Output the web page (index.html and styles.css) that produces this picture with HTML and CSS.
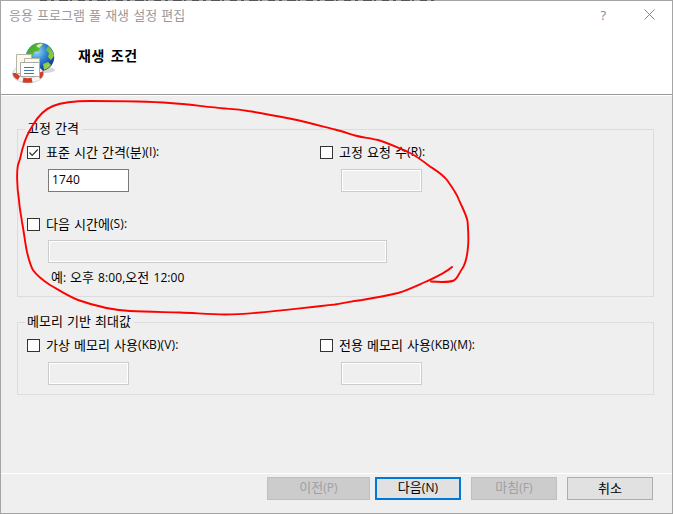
FILE: index.html
```html
<!DOCTYPE html>
<html lang="ko">
<head>
<meta charset="utf-8">
<title>응용 프로그램 풀 재생 설정 편집</title>
<link rel="stylesheet" href="styles.css">
</head>
<body>
<main class="window">
  <header class="header">
    <div class="titlebar">
      <span class="title">응용 프로그램 풀 재생 설정 편집</span>
      <span class="help">?</span>
      <svg class="close" width="11" height="11" viewBox="0 0 11 11"><path d="M.5.5l10 10M10.500.5l-10 10" fill="none" stroke="#888"/></svg>
    </div>
    <div class="banner">
      <svg class="logo" width="44" height="42" viewBox="0 0 44 42">
        <defs>
          <radialGradient id="sea" cx=".38" cy=".3" r=".75"><stop offset="0" stop-color="#9bdcf8"/><stop offset=".45" stop-color="#3488d4"/><stop offset="1" stop-color="#102d86"/></radialGradient>
          <linearGradient id="land" x2="1" y2="1"><stop stop-color="#31a52b"/><stop offset="1" stop-color="#b0dc43"/></linearGradient>
        </defs>
        <ellipse cx="33" cy="28" rx="10" ry="3" fill="#bbb" opacity=".6"/>
        <circle cx="28" cy="15" r="14.200" fill="url(#sea)"/>
        <path d="M15 11Q17 4 24 1.500l7 .5-3 3-1 4-5 1-2 5-5 1zM36 4q5 4 6 10l-3 4-3-3 1-4-3-3zM31 22l5-2 3 3q-3 4-7 5z" fill="url(#land)"/>
        <path d="M24 4q3-3 7-2l-4 4z" fill="#d9f1b1"/>
        <ellipse cx="16" cy="32" rx="13" ry="6.500" fill="none" stroke="#c4cbd0" stroke-width="5.500"/>
        <ellipse cx="16" cy="32" rx="13" ry="6.500" fill="none" stroke="#f4f4f4" stroke-width="4"/>
        <path d="M3 31q0 3 4 5M11 38q5 1 9 0M27 35q3-2 2-5" fill="none" stroke="#cf3e25" stroke-width="4.500"/>
        <path d="M4.500 12.500h15v19h-15z" fill="#fcf9e9" stroke="#b6b5ad"/>
        <path d="M12.500 16.500h15v5h-15z" fill="#fcf9e9" stroke="#b6b5ad"/>
        <path d="M8.500 20.500h19v14h-19z" fill="#fff" stroke="#aaa"/>
        <path d="M12 25.500h10M12 28.500h10M12 31.500h10" stroke="#3e79b5"/>
      </svg>
      <h1 class="heading">재생 조건</h1>
    </div>
  </header>

  <section class="content">
    <fieldset class="group fixed">
      <legend>고정 간격</legend>
      <div class="row">
        <div class="field">
          <label><span class="box"><svg width="11" height="11" viewBox="0 0 11 11"><path d="M1.500 5.500l2.700 2.800L9.700 2.500" fill="none" stroke="#333" stroke-width="1.200"/></svg></span>표준 시간 간격<i>(</i>분<i>)(I):</i></label>
          <div class="input active"><i>1740</i></div>
        </div>
        <div class="field">
          <label><span class="box"></span>고정 요청 수<i>(R):</i></label>
          <div class="input"></div>
        </div>
      </div>
      <div class="field times">
        <label><span class="box"></span>다음 시간에<i>(S):</i></label>
        <div class="input wide"></div>
        <p class="example">예<i>: </i>오후 <i>8:00,</i>오전 <i>12:00</i></p>
      </div>
    </fieldset>
    <fieldset class="group memory">
      <legend>메모리 기반 최대값</legend>
      <div class="row">
        <div class="field">
          <label><span class="box"></span>가상 메모리 사용<i>(KB)(V):</i></label>
          <div class="input"></div>
        </div>
        <div class="field">
          <label><span class="box"></span>전용 메모리 사용<i>(KB)(M):</i></label>
          <div class="input"></div>
        </div>
      </div>
    </fieldset>
  </section>

  <footer class="footer">
    <div class="button previous disabled"><span>이전<i>(P)</i></span></div>
    <div class="button default"><span>다음<i>(N)</i></span></div>
    <div class="button disabled finish"><span>마침<i>(F)</i></span></div>
    <div class="button cancel"><span>취소</span></div>
  </footer>

  <svg class="annotation" width="673" height="514" viewBox="0 0 673 514">
    <path d="M40 .5H435" stroke="#555" stroke-dasharray="7 4 3 5 9 2 2 6" fill="none"/>
    <path d="M431 281.500C438 282 449 282.500 454 280.500C458 278 459 273 462 269C467 262 467 255 468 247C469 237 468 228 467.500 221C466 214 462 207 459 200C457 194 452 187 447 180C442 174 437 171 430 166.500C423 161 415 155 407 151.500C398 148 386 142 378 140C370 138 362 137.500 355 135.500C350 134 341 131 335 129.500C321 126 306 122 292 119C277 116 262 113 248 111C240 109.500 232 109 225 108.500C206 107 188 104 170 103C144 101 116 101 90 101C76 101 63 102 53 106C43 110 37 118 33 125C29 131 25 140 23 147C21 153 21 157 19 162C16 168 17 188 19 200C19.500 208 21 215 22 222C24 232 25 243 27 252C28.500 258 30 265 33 270C37 276 44 281 50 285C59 290 68 296 78 300C95 306 112 310 130 311C147 312 164 312 180 312.500C195 313 210 314.500 225 314.500C262 314 299 308 335 304.500C344 303 353 301 362 300C374 298 386 296 398 293C408 290 416 286 425 282C434 278 444 274 452 267" fill="none" stroke="#f00" stroke-width="1.900" stroke-linecap="round"/>
  </svg>
</main>
</body>
</html>
```
FILE: styles.css
```css
* { box-sizing: border-box; }
body {
  margin: 0;
  font: 13px/16px "Noto Sans CJK KR", sans-serif;
  word-spacing: .5px;
  color: #000;
  overflow: hidden;
}
i { font: 12px/16px "Open Sans", "Noto Sans", sans-serif; letter-spacing: .1px; }
.window {
  position: relative;
  display: flex;
  flex-direction: column;
  width: 673px;
  height: 514px;
  border: 1px solid #a5a5a5;
  background: #efefef;
}
.header {
  height: 95px;
  flex: none;
  background: #fff;
  border-bottom: 1px solid #fff;
  box-shadow: inset 0 -1px #999;
}
.titlebar {
  display: flex;
  align-items: center;
  height: 27px;
  padding: 0 17px 0 8px;
  color: #999;
}
.title { flex: 1; white-space: nowrap; }
.help { font: 13px/16px "Open Sans", sans-serif; color: #888; margin-right: 38px; }
.banner { display: flex; padding: 14px 0 0 11px; }
.heading {
  margin: 0 0 0 22px;
  padding-top: 5px;
  font-size: 14px;
  line-height: 16px;
  font-weight: 700;
  letter-spacing: .7px;
  word-spacing: 1px;
}
.content { flex: 1; padding: 25px 18px 0 16px; }
.group {
  margin: 0;
  padding: 0 0 0 9px;
  border: 1px solid #dcdcdc;
  min-width: 0;
}
.group legend { height: 16px; padding: 0 3px 0 0; margin-left: -2px; text-indent: 2px; line-height: 14px; white-space: nowrap; }
.fixed { height: 176px; }
.memory { height: 81px; margin-top: 17px; }
.row { display: grid; grid-template-columns: 293px 1fr; padding-top: 7px; }
.field label { display: flex; align-items: center; height: 16px; white-space: pre; }
.box {
  width: 13px;
  height: 13px;
  margin-right: 6px;
  border: 1px solid #333;
  background: #fff;
  flex: none;
}
.box svg { display: block; }
.input {
  width: 81px;
  height: 23px;
  margin: 9px 0 0 21px;
  border: 1px solid #ccc;
  box-shadow: inset 0 0 0 1px #fff;
}
.input.active { border-color: #7a7a7a; background: #fff; padding: 1px 3px; }
.input.wide { width: 339px; margin-top: 8px; }
.times { padding-top: 24px; }
.example { margin: 6px 0 0 24px; white-space: pre; }
.footer {
  display: flex;
  height: 40px;
  padding: 3px 19px 0 0;
  justify-content: flex-end;
  border-top: 1px solid #fff;
}
.button {
  display: flex;
  align-items: center;
  justify-content: center;
  width: 86px;
  height: 23px;
  padding-bottom: 2px;
  border: 1px solid #adadad;
  background: #e1e1e1;
}
.button.disabled { color: #a0a0a0; background: #ccc; border-color: #bfbfbf; }
.previous { width: 103px; }
.default { margin-left: 5px; border: 2px solid #0078d7; }
.finish, .cancel { margin-left: 10px; }
.annotation { position: absolute; left: -1px; top: -1px; pointer-events: none; }
```
